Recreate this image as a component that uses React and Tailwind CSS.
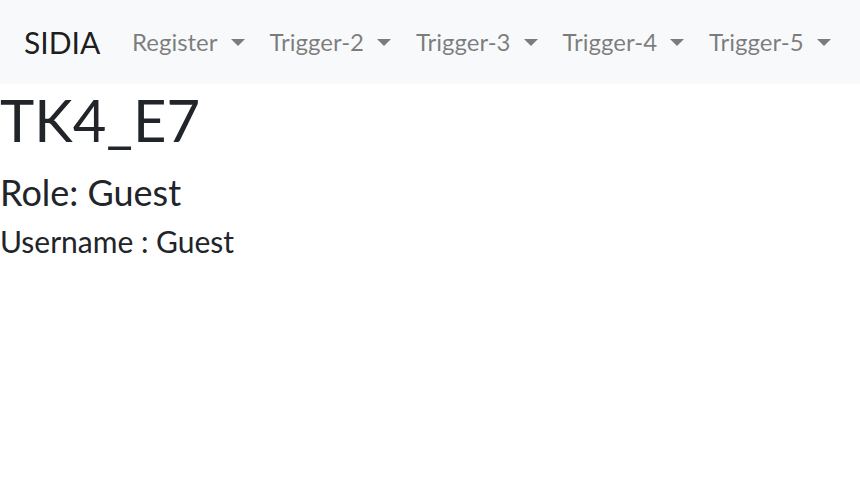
const navItems = ['Register', 'Trigger-2', 'Trigger-3', 'Trigger-4', 'Trigger-5'];

function Caret() {
  return (
    <span className="ml-[13px] inline-block h-0 w-0 border-x-[7px] border-t-[7px] border-x-transparent border-t-current align-[5px]" />
  );
}

export default function App() {
  return (
    <div className="min-h-screen bg-white text-[#212529]" style={{ fontFamily: 'Lato, "Noto Sans", sans-serif' }}>
      <nav className="flex h-[84px] items-center bg-[#f8f9fa] px-6">
        <a className="mr-6 w-[72px] whitespace-nowrap text-[30px] leading-[45px] text-[rgba(0,0,0,0.9)]">SIDIA</a>
        <ul className="flex items-center gap-[1px]">
          {navItems.map((item) => (
            <li key={item}>
              <a className="block whitespace-nowrap px-3 py-3 text-[24px] leading-[36px] text-[rgba(0,0,0,0.5)]">
                {item}
                <Caret />
              </a>
            </li>
          ))}
        </ul>
      </nav>
      <h1 className="mb-[15px] text-[58px] font-normal leading-[72px]">TK4_E7</h1>
      <h4 className="mb-[9px] text-[36px] font-normal leading-[43px]">Role: Guest</h4>
      <h5 className="mb-3 text-[30px] font-normal leading-[36px]">Username : Guest</h5>
    </div>
  );
}
